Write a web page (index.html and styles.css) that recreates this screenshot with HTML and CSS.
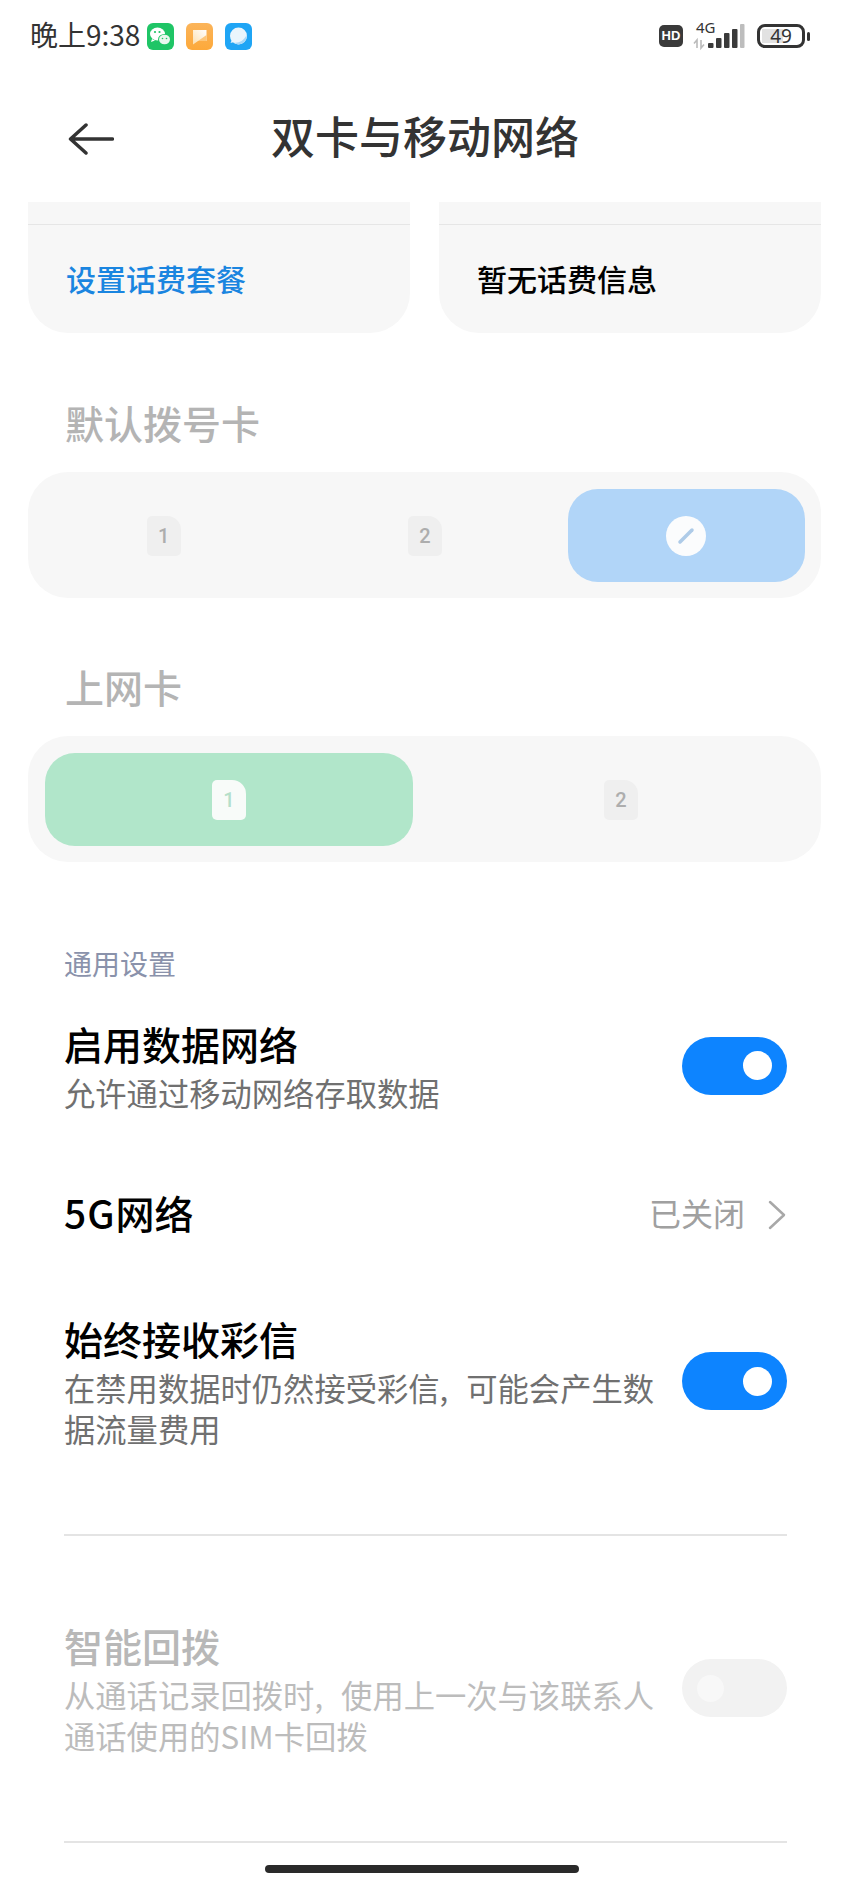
FILE: index.html
```html
<!DOCTYPE html>
<html lang="zh-CN">
<head>
    <meta charset="UTF-8">
    <meta name="viewport" content="width=device-width, initial-scale=1.0">
    <title>双卡与移动网络</title>
    <link rel="stylesheet" href="styles.css">
</head>
<body>

<div class="statusBar">
    <div class="statusLeft">
        <span class="clock">晚上9:38</span>
        <svg class="appIcon" viewBox="0 0 27 27">
            <rect width="27" height="27" rx="6" fill="#1fc566"/>
            <ellipse cx="10.500" cy="11" rx="7.500" ry="6.500" fill="#fff"/>
            <path d="M5 16l-1 3 4-1.500z" fill="#fff"/>
            <ellipse cx="17.500" cy="16.500" rx="6.500" ry="5.500" fill="#1fc566"/>
            <ellipse cx="17.500" cy="16.500" rx="5.500" ry="4.800" fill="#e9f7ee"/>
            <circle cx="8" cy="9" r="1.100" fill="#1fc566"/>
            <circle cx="12.500" cy="9" r="1.100" fill="#1fc566"/>
            <circle cx="15.500" cy="15.500" r=".8" fill="#1fc566"/>
            <circle cx="19.500" cy="15.500" r=".8" fill="#1fc566"/>
        </svg>
        <svg class="appIcon" viewBox="0 0 27 27">
            <defs>
                <linearGradient id="noteBack" x1="0" y1="0" x2="0" y2="1">
                    <stop offset="0" stop-color="#fbb45a"/>
                    <stop offset="1" stop-color="#fda93a"/>
                </linearGradient>
                <linearGradient id="notePaper" x1="1" y1="0" x2="0" y2="1">
                    <stop offset="0" stop-color="#fff"/>
                    <stop offset="1" stop-color="#fde0b0"/>
                </linearGradient>
            </defs>
            <rect width="27" height="27" rx="6" fill="url(#noteBack)"/>
            <path d="M7 7h13.500v11H12l-5 3.500z" fill="url(#notePaper)"/>
            <path d="M7 21.500L20.500 12v6H12z" fill="#fdc679"/>
        </svg>
        <svg class="appIcon" viewBox="0 0 27 27">
            <rect width="27" height="27" rx="6" fill="#1fa5f5"/>
            <circle cx="13.500" cy="13" r="8.500" fill="#eaf5fc"/>
            <path d="M5.500 20l5-1.500-3-3z" fill="#eaf5fc"/>
            <path d="M8 19.500c6 1 11-2 13.500-7.500.8 5.500-3.500 9.500-8.500 9.500z" fill="#a9d8f7"/>
        </svg>
    </div>
    <div class="statusRight">
        <span class="hdBadge">HD</span>
        <svg class="signal" width="54" height="38" viewBox="0 0 54 38">
            <path d="M4 31v-8l-3 3.500M8 23v8l3-3.500" fill="none" stroke="#bbb" stroke-width="1.600"/>
            <text x="3" y="16" class="signalText">4G</text>
            <rect x="15" y="26" width="5.500" height="5" rx="1" fill="#3a3a3a"/>
            <rect x="23" y="21" width="5.500" height="10" rx="1" fill="#3a3a3a"/>
            <rect x="31" y="16" width="5.500" height="15" rx="1" fill="#3a3a3a"/>
            <rect x="39" y="12" width="5.500" height="19" rx="1" fill="#3a3a3a"/>
            <rect x="47" y="7" width="4.500" height="24" rx="1" fill="#bdbdbd"/>
        </svg>
        <div class="battery">
            <span class="batteryFill"></span>
            <span class="batteryText">49</span>
        </div>
        <span class="batteryTip"></span>
    </div>
</div>

<div class="header">
    <svg class="backArrow" width="46" height="32" viewBox="0 0 46 32">
        <path d="M44.500 16H2.500M18 2L2.500 16 18 30" fill="none" stroke="#333" stroke-width="3.500" stroke-linecap="round" stroke-linejoin="round"/>
    </svg>
    <span class="headerTitle">双卡与移动网络</span>
</div>

<div class="planCards">
    <div class="planCard">
        <div class="planTop"></div>
        <div class="planText planLink">设置话费套餐</div>
    </div>
    <div class="planCard">
        <div class="planTop"></div>
        <div class="planText">暂无话费信息</div>
    </div>
</div>

<div class="cardTitle">默认拨号卡</div>
<div class="panel threeCols">
    <div class="choice"><span class="sim">1</span></div>
    <div class="choice"><span class="sim">2</span></div>
    <div class="choice choiceBlue">
        <span class="askCircle">
            <svg width="20" height="20" viewBox="0 0 20 20"><path d="M4 16L16 4" stroke="#aecbe8" stroke-width="3.500" stroke-linecap="round"/></svg>
        </span>
    </div>
</div>

<div class="cardTitle">上网卡</div>
<div class="panel twoCols">
    <div class="choice choiceGreen"><span class="sim simOn">1</span></div>
    <div class="choice"><span class="sim">2</span></div>
</div>

<div class="groupLabel">通用设置</div>

<div class="row">
    <div class="rowText">
        <div class="rowTitle">启用数据网络</div>
        <div class="rowSub">允许通过移动网络存取数据</div>
    </div>
    <span class="toggle"><span class="knob"></span></span>
</div>

<div class="row rowLink">
    <div class="rowText">
        <div class="rowTitle"><span class="latin">5G</span>网络</div>
    </div>
    <span class="rowValue">已关闭</span>
    <svg class="chevron" width="18" height="30" viewBox="0 0 18 30">
        <path d="M2 2l14 13L2 28" fill="none" stroke="#a8a8a8" stroke-width="2.500" stroke-linecap="round" stroke-linejoin="round"/>
    </svg>
</div>

<div class="row">
    <div class="rowText">
        <div class="rowTitle">始终接收彩信</div>
        <div class="rowSub">在禁用数据时仍然接受彩信, 可能会产生数据流量费用</div>
    </div>
    <span class="toggle"><span class="knob"></span></span>
</div>

<div class="line"></div>

<div class="row rowOff">
    <div class="rowText">
        <div class="rowTitle">智能回拨</div>
        <div class="rowSub">从通话记录回拨时, 使用上一次与该联系人通话使用的SIM卡回拨</div>
    </div>
    <span class="toggle toggleOff"><span class="knob"></span></span>
</div>

<div class="line"></div>

<div class="homeBar"></div>

</body>
</html>
```

FILE: styles.css
```css
* {
    box-sizing: border-box;
}

html, body {
    height: 1889px;
}

body {
    margin: 0;
    background-color: #fff;
    font-family: "Noto Sans CJK SC", "Noto Sans", sans-serif;
    overflow: hidden;
    position: relative;
}

/* status bar */
.statusBar {
    height: 72px;
    display: flex;
    justify-content: space-between;
    align-items: center;
    padding-left: 30px;
    padding-right: 40px;
}

.statusLeft, .statusRight {
    display: flex;
    align-items: center;
}

.clock {
    font-size: 28px;
    color: #333;
    width: 117px;
    padding-bottom: 4px;
    white-space: nowrap;
}

.appIcon {
    width: 27px;
    height: 27px;
    margin-right: 12px;
}

.hdBadge {
    width: 24px;
    height: 22px;
    border-radius: 5px;
    background-color: #3a3a3a;
    color: #fff;
    font-family: "Liberation Sans", sans-serif;
    font-size: 13px;
    font-weight: bold;
    line-height: 22px;
    text-align: center;
    margin-right: 10px;
}

.signal {
    margin-right: 10px;
}

.signalText {
    font-family: "Noto Sans", sans-serif;
    font-size: 15px;
    fill: #333;
}

.battery {
    width: 48px;
    height: 24px;
    border: 3px solid #333;
    border-radius: 8px;
    position: relative;
    text-align: center;
}

.batteryFill {
    position: absolute;
    left: 2px;
    top: 2px;
    bottom: 2px;
    width: 21px;
    background-color: #e2e2e2;
}

.batteryText {
    position: relative;
    display: block;
    font-family: "Noto Sans", sans-serif;
    font-size: 19px;
    line-height: 18px;
    color: #333;
}

.batteryTip {
    width: 3px;
    height: 9px;
    margin-left: 2px;
    border-radius: 2px;
    background-color: #333;
}

/* title bar */
.header {
    height: 130px;
    display: flex;
    align-items: center;
    justify-content: center;
    position: relative;
}

.backArrow {
    position: absolute;
    left: 68px;
    top: 51px;
}

.headerTitle {
    font-size: 44px;
    font-weight: 500;
    color: #333;
    padding-bottom: 5px;
}

/* plan cards cut by the scroll edge */
.planCards {
    display: grid;
    grid-template-columns: 1fr 1fr;
    gap: 29px;
    margin: 0 29px 0 28px;
}

.planCard {
    height: 131px;
    background-color: #f7f7f7;
    border-radius: 0 0 40px 40px;
}

.planTop {
    height: 23px;
    border-bottom: 1px solid #e6e6e6;
}

.planText {
    font-size: 30px;
    font-weight: 500;
    line-height: 44px;
    margin-top: 31px;
    padding-left: 38px;
    color: #000;
}

.planLink {
    color: #1a85e0;
}

/* sim pickers */
.cardTitle {
    font-size: 39px;
    font-weight: 500;
    line-height: 48px;
    padding-bottom: 6px;
    padding-left: 65px;
    color: #b4b4b4;
    margin-top: 65px;
    margin-bottom: 20px;
}

.panel + .cardTitle {
    margin-top: 64px;
}

.panel {
    height: 126px;
    margin: 0 29px 0 28px;
    padding: 17px 16px 16px 17px;
    background-color: #f7f7f7;
    border-radius: 40px;
    display: grid;
    gap: 24px;
}

.threeCols {
    grid-template-columns: 1fr 1fr 1fr;
}

.twoCols {
    grid-template-columns: 1fr 1fr;
}

.choice {
    display: flex;
    align-items: center;
    justify-content: center;
    border-radius: 30px;
}

.choiceBlue {
    background-color: #b1d5f8;
}

.choiceGreen {
    background-color: #b1e6ca;
}

.sim {
    width: 34px;
    height: 40px;
    border-radius: 5px 14px 5px 5px;
    background-color: #efefef;
    color: #adadad;
    font-family: Roboto, sans-serif;
    font-size: 20px;
    font-weight: 500;
    line-height: 40px;
    text-align: center;
}

.simOn {
    background-color: #f8fbf9;
    color: #b5dfca;
}

.askCircle {
    width: 40px;
    height: 40px;
    border-radius: 50%;
    background-color: #fbfcfd;
    display: flex;
    align-items: center;
    justify-content: center;
}

/* settings rows */
.groupLabel {
    font-size: 28px;
    line-height: 40px;
    color: #8a92ab;
    margin-top: 81px;
    margin-bottom: 38px;
    padding-left: 64px;
}

.row {
    display: flex;
    align-items: center;
    margin: 0 63px 75px 64px;
}

.rowLink {
    min-height: 52px;
}

.rowText {
    flex: 1;
    min-width: 0;
}

.rowTitle {
    font-size: 39px;
    font-weight: 500;
    line-height: 44px;
    padding-bottom: 6px;
    color: #000;
}

.latin {
    letter-spacing: 1px;
}

.rowSub {
    width: 600px;
    margin-top: 1px;
    padding-bottom: 1px;
    font-size: 31.3px;
    line-height: 41px;
    word-spacing: 11px;
    color: #707070;
}

.rowValue {
    font-size: 32px;
    color: #a0a0a0;
    margin-right: 23px;
    padding-bottom: 6px;
}

.chevron {
    margin-right: 1px;
}

.toggle {
    width: 105px;
    height: 58px;
    border-radius: 29px;
    background-color: #0d84ff;
    display: flex;
    align-items: center;
    justify-content: flex-end;
    padding-right: 15px;
    margin-bottom: 4px;
    flex-shrink: 0;
}

.knob {
    width: 29px;
    height: 29px;
    border-radius: 50%;
    background-color: #fff;
}

.rowOff .rowTitle {
    color: #b8b8b8;
}

.rowOff .rowSub {
    color: #bcbcbc;
}

.toggleOff {
    background-color: #f2f2f2;
    justify-content: flex-start;
    padding-left: 15px;
    padding-right: 0;
}

.toggleOff .knob {
    width: 27px;
    height: 27px;
    background-color: #f8f8f8;
}

.line {
    height: 2px;
    margin: 84px 63px 87px 64px;
    background-color: #e4e4e4;
}

.homeBar {
    position: absolute;
    left: 265px;
    bottom: 16px;
    width: 314px;
    height: 8px;
    border-radius: 4px;
    background-color: #2a2a2a;
}
```
